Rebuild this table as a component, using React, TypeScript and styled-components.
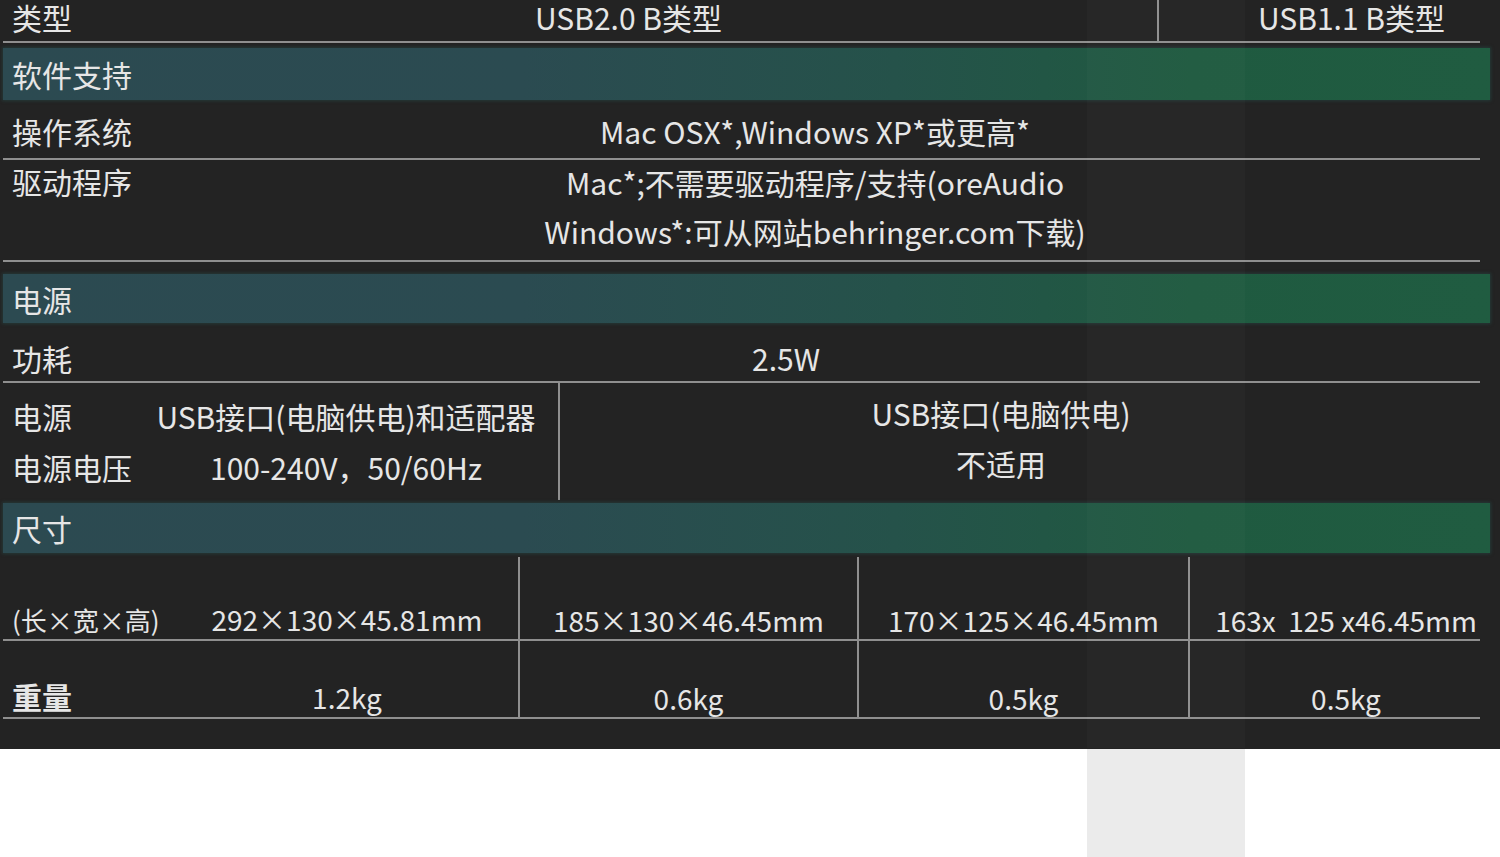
import React from "react";
import styled, { createGlobalStyle } from "styled-components";

const GlobalStyle = createGlobalStyle`
  html, body {
    margin: 0;
    padding: 0;
    background: #ffffff;
  }
  body {
    font-family: "Noto Sans CJK SC", "Noto Sans", sans-serif;
    color: #e6e6e6;
  }
`;

const LINE = "#8f8f8f";
const TEXT_SIZE = 30;

const Page = styled.div`
  width: 1500px;
  position: relative;
  overflow: hidden;
`;

const Sheet = styled.div`
  background: #232323;
  padding: 0 20px 30px 3px;
  display: flex;
  flex-direction: column;
`;

const Row = styled.div<{ $cols: string; $h: number; $line?: boolean }>`
  display: grid;
  grid-template-columns: ${(p) => p.$cols};
  height: ${(p) => p.$h}px;
  border-bottom: ${(p) => (p.$line ? `2px solid ${LINE}` : "none")};
  font-size: ${TEXT_SIZE}px;
  line-height: 1;
`;

const Label = styled.div<{ $pt: number }>`
  padding-left: 9px;
  padding-top: ${(p) => p.$pt}px;
  white-space: nowrap;
`;

const Cell = styled.div<{ $divider?: boolean; $pt: number; $pl?: number }>`
  display: flex;
  justify-content: center;
  align-items: flex-start;
  padding-top: ${(p) => p.$pt}px;
  padding-left: ${(p) => p.$pl ?? 0}px;
  border-left: ${(p) => (p.$divider ? `2px solid ${LINE}` : "none")};
  white-space: nowrap;
`;

const Stack = styled.div<{ $lh: number; $mt: number }>`
  display: flex;
  flex-direction: column;
  align-items: center;
  margin-top: ${(p) => p.$mt}px;
  line-height: ${(p) => p.$lh}px;
  white-space: nowrap;
`;

const Section = styled.div<{ $mt: number; $h: number }>`
  margin-top: ${(p) => p.$mt}px;
  margin-right: -10px;
  height: ${(p) => p.$h}px;
  display: flex;
  align-items: center;
  padding-left: 9px;
  font-size: ${TEXT_SIZE}px;
  background: linear-gradient(
    90deg,
    #2c4a51 0%,
    #2b4b51 35%,
    #25524a 60%,
    #1f5a40 80%,
    #205c41 100%
  );
  box-shadow: 0 0 3px 1px rgba(36, 70, 68, 0.6);
`;

const PowerBlock = styled.div`
  display: grid;
  grid-template-columns: 555px 1fr;
  height: 117px;
  font-size: ${TEXT_SIZE}px;
`;

const PowerLeft = styled.div`
  display: grid;
  grid-template-columns: 131px 1fr;
  grid-auto-rows: 51px;
  padding-top: 8px;
  line-height: 51px;
  white-space: nowrap;
`;

const PowerLabel = styled.div`
  padding-left: 9px;
`;

const PowerValue = styled.div`
  text-align: center;
`;

const PowerRight = styled.div`
  border-left: 2px solid ${LINE};
  padding: 5px 38px 0 0;
  display: flex;
  flex-direction: column;
  align-items: center;
  line-height: 50px;
  white-space: nowrap;
`;

const DimBlock = styled.div`
  margin-top: 4px;
  display: grid;
  grid-template-columns: 515px 339px 331px 292px;
  grid-template-rows: 84px 78px;
  font-size: 28px;
  line-height: 1;
`;

const DimCell = styled.div<{ $divider?: boolean; $first?: boolean; $pb: number; $pl?: number }>`
  display: grid;
  grid-template-columns: ${(p) => (p.$first ? "173px 1fr" : "1fr")};
  align-items: end;
  padding-bottom: ${(p) => p.$pb}px;
  padding-left: ${(p) => p.$pl ?? 0}px;
  border-bottom: 2px solid ${LINE};
  border-left: ${(p) => (p.$divider ? `2px solid ${LINE}` : "none")};
  white-space: nowrap;
`;

const DimLabel = styled.span<{ $small?: boolean }>`
  padding-left: 9px;
  font-size: ${(p) => (p.$small ? 26 : TEXT_SIZE)}px;
  font-weight: ${(p) => (p.$small ? 400 : 700)};
`;

const DimValue = styled.span`
  text-align: center;
  white-space: pre;
`;

const Footer = styled.div`
  height: 109px;
  display: flex;
`;

const FooterStrip = styled.div`
  margin-left: 1087px;
  width: 158px;
  background: #ebebeb;
`;

const WatermarkStrip = styled.div`
  position: absolute;
  top: 0;
  left: 1087px;
  width: 158px;
  height: 748px;
  background: rgba(255, 255, 255, 0.018);
  pointer-events: none;
`;

const dims = [
  { size: "185×130×46.45mm", weight: "0.6kg" },
  { size: "170×125×46.45mm", weight: "0.5kg" },
  { size: "163x  125 x46.45mm", weight: "0.5kg", pl: 22 },
];

const App = () => (
  <Page>
    <GlobalStyle />
    <Sheet>
      <Row $cols="97px 1057px 1fr" $h={41} $line>
        <Label $pt={2}>类型</Label>
        <Cell $pt={2}>USB2.0 B类型</Cell>
        <Cell $divider $pt={2} $pl={64}>USB1.1 B类型</Cell>
      </Row>

      <Section $mt={5} $h={52}>软件支持</Section>

      <Row $cols="147px 1fr" $h={58} $line>
        <Label $pt={16}>操作系统</Label>
        <Cell $pt={16}>Mac OSX*,Windows XP*或更高*</Cell>
      </Row>
      <Row $cols="147px 1fr" $h={100} $line>
        <Label $pt={6}>驱动程序</Label>
        <Stack $lh={49} $mt={-2}>
          <span>Mac*;不需要驱动程序/支持(oreAudio</span>
          <span>Windows*:可从网站behringer.com下载)</span>
        </Stack>
      </Row>

      <Section $mt={12} $h={49}>电源</Section>

      <Row $cols="89px 1fr" $h={58} $line>
        <Label $pt={20}>功耗</Label>
        <Cell $pt={20}>2.5W</Cell>
      </Row>
      <PowerBlock>
        <PowerLeft>
          <PowerLabel>电源</PowerLabel>
          <PowerValue>USB接口(电脑供电)和适配器</PowerValue>
          <PowerLabel>电源电压</PowerLabel>
          <PowerValue>100-240V，50/60Hz</PowerValue>
        </PowerLeft>
        <PowerRight>
          <span>USB接口(电脑供电)</span>
          <span>不适用</span>
        </PowerRight>
      </PowerBlock>

      <Section $mt={3} $h={50}>尺寸</Section>

      <DimBlock>
        <DimCell $first $pb={6}>
          <DimLabel $small>(长×宽×高)</DimLabel>
          <DimValue>292×130×45.81mm</DimValue>
        </DimCell>
        {dims.map((d) => (
          <DimCell key={d.size} $divider $pb={5} $pl={d.pl}>
            <DimValue>{d.size}</DimValue>
          </DimCell>
        ))}
        <DimCell $first $pb={6}>
          <DimLabel>重量</DimLabel>
          <DimValue>1.2kg</DimValue>
        </DimCell>
        {dims.map((d) => (
          <DimCell key={d.weight + d.size} $divider $pb={5} $pl={d.pl}>
            <DimValue>{d.weight}</DimValue>
          </DimCell>
        ))}
      </DimBlock>
    </Sheet>
    <Footer>
      <FooterStrip />
    </Footer>
    <WatermarkStrip />
  </Page>
);

export default App;
